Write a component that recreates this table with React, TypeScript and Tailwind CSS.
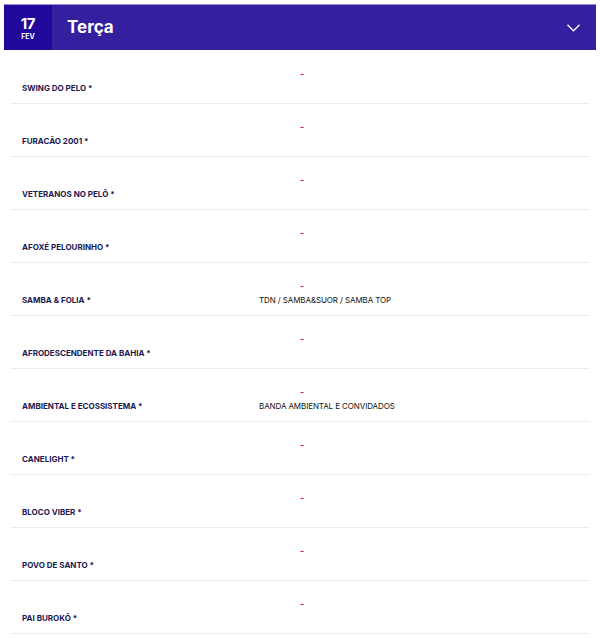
import React from "react";

const rows: { name: string; bands: string }[] = [
  { name: "SWING DO PELO *", bands: "" },
  { name: "FURACÃO 2001 *", bands: "" },
  { name: "VETERANOS NO PELÔ *", bands: "" },
  { name: "AFOXÉ PELOURINHO *", bands: "" },
  { name: "SAMBA & FOLIA *", bands: "TDN / SAMBA&SUOR / SAMBA TOP" },
  { name: "AFRODESCENDENTE DA BAHIA *", bands: "" },
  { name: "AMBIENTAL E ECOSSISTEMA *", bands: "BANDA AMBIENTAL E CONVIDADOS" },
  { name: "CANELIGHT *", bands: "" },
  { name: "BLOCO VIBER *", bands: "" },
  { name: "POVO DE SANTO *", bands: "" },
  { name: "PAI BUROKÔ *", bands: "" },
];

const App = () => {
  return (
    <div className="w-[600px] h-[639px] bg-white overflow-hidden" style={{ fontFamily: "Inter, 'Liberation Sans', sans-serif" }}>
      <div className="pt-1 px-1">
        <div className="flex h-[46px] bg-[#341f9f] border-t border-[#9b8de0]">
          <div className="w-[48px] bg-[#20099a] flex flex-col items-center justify-center text-white leading-none">
            <span className="text-[15px] font-bold tracking-tight">17</span>
            <span className="text-[7px] font-bold mt-[2px]">FEV</span>
          </div>
          <div className="flex-1 flex items-center pl-[15px] text-white text-[17px] font-bold">Terça</div>
          <div className="flex items-center pr-[16px]">
            <svg width="13" height="8" viewBox="0 0 13 8" fill="none" stroke="#ffffff" strokeWidth="1.3">
              <path d="M0.5 0.8 L6.5 6.8 L12.5 0.8" />
            </svg>
          </div>
        </div>
      </div>
      <div className="px-[10px] pt-[1px]">
        {rows.map((r) => (
          <div key={r.name} className="h-[53px] border-b border-[#ececec] relative">
            <div className="absolute left-[290px] top-[18px] text-[#e8174b] text-[9px] font-bold leading-none">-</div>
            <div className="flex pt-[33px] items-center leading-none">
              <div className="w-[249px] pl-[12px] text-[8px] font-bold text-[#1c1950]">{r.name}</div>
              <div className="text-[8px] text-[#111111] tracking-[-0.1px]">{r.bands}</div>
            </div>
          </div>
        ))}
      </div>
    </div>
  );
};

export default App;
